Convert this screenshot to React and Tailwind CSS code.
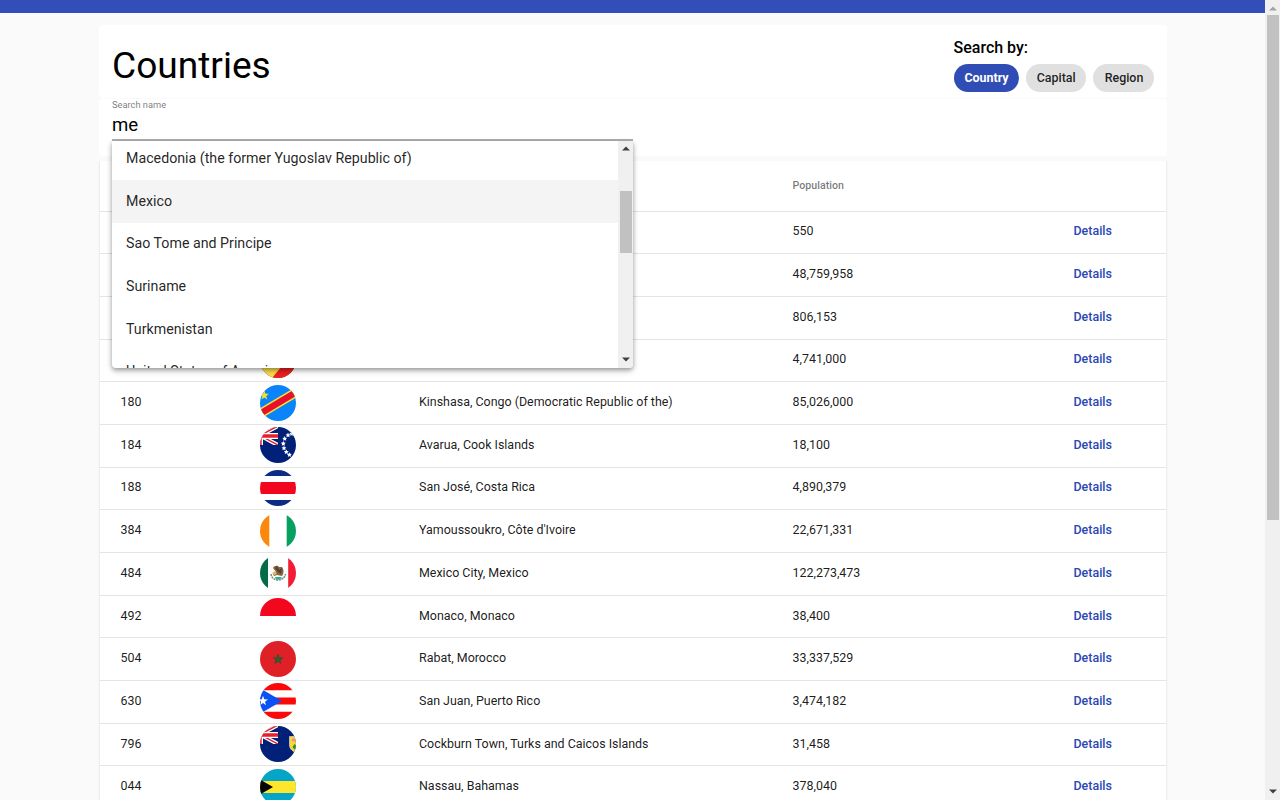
import React from 'react';

function star(cx, cy, r, inner = 0.4, points = 5) {
  const out = [];
  for (let i = 0; i < points * 2; i++) {
    const a = (Math.PI * i) / points - Math.PI / 2;
    const k = i % 2 ? r * inner : r;
    out.push(`${(cx + k * Math.cos(a)).toFixed(2)},${(cy + k * Math.sin(a)).toFixed(2)}`);
  }
  return out.join(' ');
}

function UnionCanton() {
  return (
    <g>
      <path d="M-18 -1L18 18M18 -1L-18 18" stroke="#fff" strokeWidth="4.2" />
      <path d="M-18 -1L18 18M18 -1L-18 18" stroke="#e5202c" strokeWidth="1.5" />
      <path d="M0 0V18M-18 9H18" stroke="#fff" strokeWidth="6" />
      <path d="M0 0V18M-18 9H18" stroke="#e5202c" strokeWidth="3.4" />
    </g>
  );
}

const flags = {
  congo: (
    <>
      <rect width="36" height="36" fill="#009543" />
      <path d="M36 0V36H0Z" fill="#ee2020" />
      <path d="M24 0H42L12 36H-2V24Z" fill="#fbde4a" />
    </>
  ),
  drc: (
    <>
      <rect width="36" height="36" fill="#0a84fb" />
      <path d="M-2 30L38 6" stroke="#f7e32b" strokeWidth="9.5" />
      <path d="M-2 30L38 6" stroke="#e8112d" strokeWidth="6.4" />
      <polygon points={star(4.3, 10.4, 5)} fill="#f7e32b" />
    </>
  ),
  cook: (
    <>
      <rect width="36" height="36" fill="#012178" />
      <svg width="18" height="18"><UnionCanton /></svg>
      {[[28, 8.2], [31.8, 6.8], [24.7, 11.7], [23.3, 16.6], [24, 21.2], [26.3, 25], [29.4, 27.8]].map(([x, y]) => (
        <polygon key={`${x}-${y}`} points={star(x, y, 2.6, 0.5)} fill="#fff" />
      ))}
    </>
  ),
  costa: (
    <>
      <rect width="36" height="36" fill="#fff" />
      <path d="M0 0H36V6H0ZM0 30H36V36H0Z" fill="#0b2c85" />
      <path d="M0 12H36V24H0Z" fill="#f3071f" />
    </>
  ),
  ivory: (
    <>
      <rect width="36" height="36" fill="#fff" />
      <path d="M0 0H9.3V36H0Z" fill="#fb870d" />
      <path d="M26.7 0H36V36H26.7Z" fill="#06a15f" />
    </>
  ),
  mexico: (
    <>
      <rect width="36" height="36" fill="#fff" />
      <path d="M0 0H8V36H0Z" fill="#046b48" />
      <path d="M28.2 0H36V36H28.2Z" fill="#f21c35" />
      <path d="M11 19C12 27 24 27 25.5 19" fill="none" stroke="#719574" strokeWidth="1.6" strokeDasharray="2 .7" />
      <path d="M13 13C14 10.5 18 10 19 12L22 12C24 14 24 19 22 21L17 20L14 21L13 19L16 17Z" fill="#8a6543" />
      <path d="M15 13L17 11L19 15L22 13L21 19L18 17Z" fill="#593f2c" />
      <path d="M12 18L15 16L17 19L14 20Z" fill="#dfb867" />
      <path d="M15 22H22L20 24.5H16Z" fill="#36a9a0" />
    </>
  ),
  monaco: (
    <>
      <rect width="36" height="36" fill="#fff" />
      <path d="M0 0H36V18H0Z" fill="#f3071f" />
    </>
  ),
  morocco: (
    <>
      <rect width="36" height="36" fill="#df2027" />
      <polygon points={star(18, 18.3, 5)} fill="#176331" fillOpacity=".75" stroke="#0b5b2e" strokeWidth=".7" />
    </>
  ),
  puerto: (
    <>
      <rect width="36" height="36" fill="#fff" />
      <path d="M0 0H36V7.2H0ZM0 14.4H36V21.6H0ZM0 28.8H36V36H0Z" fill="#fb0909" />
      <path d="M-9 0L22 18L-9 36Z" fill="#0b51f4" />
      <polygon points={star(3, 18, 5.2)} fill="#fff" />
    </>
  ),
  turks: (
    <>
      <rect width="36" height="36" fill="#012178" />
      <svg width="18" height="18"><UnionCanton /></svg>
      <path d="M29.5 10.5H39V20C39 23 36 25 34.5 26C31 24 29.5 22 29.5 19Z" fill="#ffd735" stroke="#e9e8dc" strokeWidth=".6" />
      <circle cx="33.4" cy="14" r="1.8" fill="#ef9092" />
      <path d="M34.5 18L37 20L35 24L32.5 21Z" fill="#288c3c" />
    </>
  ),
  bahamas: (
    <>
      <rect width="36" height="36" fill="#05a5c8" />
      <path d="M0 12H36V24H0Z" fill="#ffe52c" />
      <path d="M-8 6L13 18L-8 30Z" fill="#060606" />
    </>
  ),
};

function Flag({ name }) {
  if (!flags[name]) return <span />;
  return (
    <div className="pb-px pl-[0.5px]">
      <svg viewBox="0 0 36 36" className="h-9 w-9 overflow-hidden rounded-full">
        {flags[name]}
      </svg>
    </div>
  );
}

const rows = [
  ['', null, '', '550'],
  ['', null, '', '48,759,958'],
  ['', null, '', '806,153'],
  ['', 'congo', '', '4,741,000'],
  ['180', 'drc', 'Kinshasa, Congo (Democratic Republic of the)', '85,026,000'],
  ['184', 'cook', 'Avarua, Cook Islands', '18,100'],
  ['188', 'costa', 'San José, Costa Rica', '4,890,379'],
  ['384', 'ivory', "Yamoussoukro, Côte d'Ivoire", '22,671,331'],
  ['484', 'mexico', 'Mexico City, Mexico', '122,273,473'],
  ['492', 'monaco', 'Monaco, Monaco', '38,400'],
  ['504', 'morocco', 'Rabat, Morocco', '33,337,529'],
  ['630', 'puerto', 'San Juan, Puerto Rico', '3,474,182'],
  ['796', 'turks', 'Cockburn Town, Turks and Caicos Islands', '31,458'],
  ['044', 'bahamas', 'Nassau, Bahamas', '378,040'],
];

const options = [
  'Macedonia (the former Yugoslav Republic of)',
  'Mexico',
  'Sao Tome and Principe',
  'Suriname',
  'Turkmenistan',
  'United States of America',
];

function Arrow({ down, className }) {
  return (
    <svg viewBox="0 0 8 5" className={`h-[5px] w-2 ${className}`}>
      <path d={down ? 'M0 .5H8L4 4.5Z' : 'M0 4.5H8L4 .5Z'} fill="currentColor" />
    </svg>
  );
}

function SearchMenu() {
  return (
    <div className="absolute left-0 top-full z-10 mt-[2px] flex h-[227px] w-[521px] overflow-hidden rounded-b-[4px] bg-white shadow-[0_2px_4px_rgba(0,0,0,0.3),0_3px_7px_rgba(0,0,0,0.16)]">
      <ul className="-mt-[3.7px] flex-1">
        {options.map((o) => (
          <li
            key={o}
            className={`flex h-[42.67px] items-center pl-[14px] text-[14.22px] text-black/87 ${o === 'Mexico' ? 'bg-[#f4f4f4]' : ''}`}
          >
            {o}
          </li>
        ))}
      </ul>
      <div className="flex w-[15px] flex-col items-center bg-[#f0f0f0] pb-[6px] pt-[5px]">
        <Arrow className="text-[#404040]" />
        <div className="mt-[40px] h-[62px] w-[12px] bg-[#c1c1c1]" />
        <Arrow down className="mt-auto text-[#404040]" />
      </div>
    </div>
  );
}

function Chip({ active, children, className }) {
  return (
    <button
      className={`h-[28px] rounded-full pl-px text-[12.44px] ${className} ${active ? 'bg-[#304db6] font-bold text-white' : 'bg-[#e0e0e0] font-medium text-black/87'}`}
    >
      {children}
    </button>
  );
}

export default function App() {
  return (
    <div className="flex h-[800px] w-[1280px] overflow-hidden bg-[#fafafa] font-[Roboto,sans-serif] text-black/90">
      <div className="flex min-w-0 flex-1 flex-col">
        <header className="h-[13px] shrink-0 bg-[#324eb8]" />
        <main className="ml-[99px] mt-[12px] w-[1068px]">
          <section className="flex h-[73px] justify-between rounded-[4px] bg-white pl-[13px] pr-[13px]">
            <h1 className="mt-[15px] text-[37.1px] leading-[52px] text-black">Countries</h1>
            <div className="w-[200.5px] pt-[13px]">
              <div className="text-[16px] font-medium leading-[20px] text-black">Search by:</div>
              <div className="mt-[6px] flex gap-[7px]">
                <Chip active className="w-[65px]">Country</Chip>
                <Chip className="w-[60.5px]">Capital</Chip>
                <Chip className="w-[61px]">Region</Chip>
              </div>
            </div>
          </section>
          <section className="mt-px h-[57px] rounded-[4px] bg-white pl-[13px]">
            <div className="relative h-[42px] w-[521px] border-b-2 border-[#b0b0b0]">
              <div className="text-[9.3px] leading-[11px] text-black/54">Search name</div>
              <div className="mt-[4px] text-[18.6px] leading-[22px] text-black">me</div>
              <SearchMenu />
            </div>
          </section>
          <section className="mt-[5px] border-x border-[#eeeeee] bg-white text-[12.44px] shadow-[0_1px_2px_rgba(0,0,0,0.06)]">
            <div className="grid h-[50.5px] grid-cols-[138.5px_160px_373.5px_281px_1fr] items-center border-b border-[#e4e4e4] pl-[20.5px] text-[10.67px] font-medium text-black/54">
              <span className="col-start-4">Population</span>
            </div>
            {rows.map(([code, flag, place, population]) => (
              <div
                key={population}
                className="grid h-[42.69px] grid-cols-[138.5px_160px_373.5px_281px_1fr] items-center border-b border-[#e4e4e4] pl-[20.5px]"
              >
                <span className="pb-[1.3px]">{code}</span>
                <Flag name={flag} />
                <span className="pb-[1.3px]">{place}</span>
                <span className="pb-[1.3px]">{population}</span>
                <a className="pb-[1.3px] font-medium text-[#2847b4]">Details</a>
              </div>
            ))}
          </section>
        </main>
      </div>
      <div className="flex w-[15px] flex-col items-center bg-[#f0f0f0] pb-[6px] pt-[6px]">
        <Arrow className="text-[#a3a3a3]" />
        <div className="mt-[4px] h-[505px] w-[12px] bg-[#c1c1c1]" />
        <Arrow down className="mt-auto text-[#404040]" />
      </div>
    </div>
  );
}
